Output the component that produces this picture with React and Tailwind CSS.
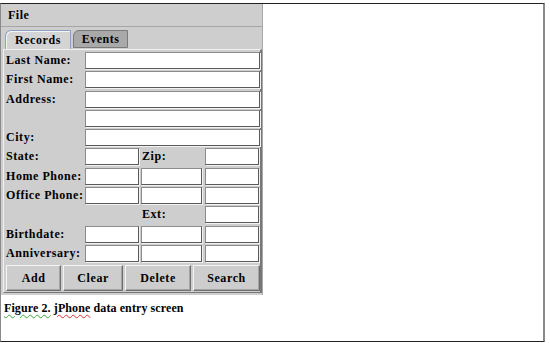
const serif = { fontFamily: '"Liberation Serif", "DejaVu Serif", serif' }

function Field({ className = '' }) {
  return (
    <div
      className={`h-[17px] bg-white border border-t-[#8c8c8c] border-l-[#8c8c8c] border-b-[#5a5a5a] border-r-[#5a5a5a] shadow-[1px_1px_0_#f2f2f2] ${className}`}
    />
  )
}

function Label({ children }) {
  return (
    <div className="h-[17px] leading-[17px] text-[12px] font-bold tracking-[0.55px] text-black whitespace-nowrap">
      {children}
    </div>
  )
}

function Row({ label, children }) {
  return (
    <div className="flex h-[17px]">
      <div className="w-[80px] pl-[1px]">
        <Label>{label}</Label>
      </div>
      {children}
    </div>
  )
}

function Triple() {
  return (
    <>
      <Field className="w-[54px]" />
      <Field className="w-[61px] ml-[2px]" />
      <Field className="w-[54px] ml-[3px]" />
    </>
  )
}

function Btn({ children, w }) {
  return (
    <div
      className={`${w} h-[26px] flex items-center justify-center bg-[#cdcdcd] border border-t-[#f4f4f4] border-l-[#f4f4f4] border-b-[#6e6e6e] border-r-[#6e6e6e] shadow-[inset_-1px_-1px_0_#a4a4a4] text-[12px] font-bold tracking-[0.6px]`}
    >
      {children}
    </div>
  )
}

export default function App() {
  return (
    <div className="w-[550px] h-[343px] bg-white pt-[3px] text-black" style={serif}>
      <div className="w-[545px] h-[339px] border-t border-b border-t-[#222] border-b-[#222] border-l border-l-[#8a8a8a] border-r-2 border-r-[#8a8a8a]">
        <div className="w-[262px] bg-[#cecece] border-r border-r-[#a8a8a8] pb-[2px]">
          {/* Menu bar */}
          <div className="h-[23px] border-b border-b-[#a6a6a6] flex items-center pl-[7px] text-[12px] font-bold tracking-[0.5px]">
            File
          </div>

          {/* Tabs */}
          <div className="h-[22px] flex items-end pl-[4px] gap-[2px]">
            <div className="h-[19px] w-[66px] bg-[#d4d4d4] border border-[#8aa2c2] border-b-0 rounded-tl-[6px] flex items-center justify-center text-[12px] font-bold tracking-[0.6px] shadow-[inset_1px_1px_0_#f4f4f4]">
              Records
            </div>
            <div className="h-[18px] mb-[1px] w-[55px] bg-[#a9a9a9] border border-[#7a7a7a] rounded-tl-[6px] flex items-center justify-center text-[12px] font-bold tracking-[0.5px]">
              Events
            </div>
          </div>

          {/* Content panel */}
          <div className="ml-[2px] w-[259px] border-t border-t-[#f0f0f0] border-l border-l-[#f0f0f0] border-r-2 border-r-[#777] border-b border-b-[#777] pt-[2px] pl-[1px] pb-[1px] flex flex-col gap-y-[2.3px]">
            <Row label="Last Name:"><Field className="w-[175px]" /></Row>
            <Row label="First Name:"><Field className="w-[175px]" /></Row>
            <Row label="Address:"><Field className="w-[175px]" /></Row>
            <Row label=""><Field className="w-[175px]" /></Row>
            <Row label="City:"><Field className="w-[175px]" /></Row>
            <Row label="State:">
              <Field className="w-[54px]" />
              <div className="w-[61px] ml-[2px] pl-[1px]"><Label>Zip:</Label></div>
              <Field className="w-[54px] ml-[3px]" />
            </Row>
            <Row label="Home Phone:"><Triple /></Row>
            <Row label="Office Phone:"><Triple /></Row>
            <Row label="">
              <div className="w-[54px]" />
              <div className="w-[61px] ml-[2px] pl-[1px]"><Label>Ext:</Label></div>
              <Field className="w-[54px] ml-[3px]" />
            </Row>
            <Row label="Birthdate:"><Triple /></Row>
            <Row label="Anniversary:"><Triple /></Row>
            <div className="flex gap-[2px] mt-[0.7px] pl-[1px]">
              <Btn w="w-[56px]">Add</Btn>
              <Btn w="w-[61px]">Clear</Btn>
              <Btn w="w-[67px]">Delete</Btn>
              <Btn w="w-[68px]">Search</Btn>
            </div>
          </div>
        </div>

        {/* Caption */}
        <div className="mt-[6px] pl-[3px] text-[12px] font-bold leading-[14px] tracking-[0.1px] whitespace-pre">
          <span className="underline decoration-wavy decoration-[#3aa83a] decoration-1 underline-offset-2">Figure 2.</span>{' '}
          <span className="underline decoration-wavy decoration-[#e03030] decoration-1 underline-offset-2">jPhone</span> data entry screen
        </div>
      </div>
    </div>
  )
}
